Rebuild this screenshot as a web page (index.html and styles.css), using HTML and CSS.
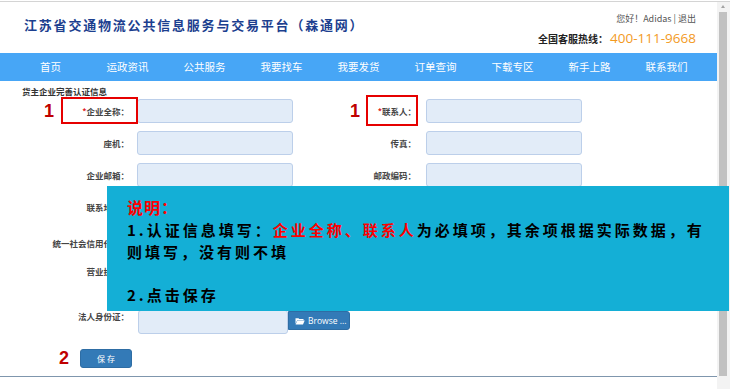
FILE: index.html
```html
<!DOCTYPE html>
<html lang="zh-CN">
<head>
    <meta charset="UTF-8">
    <meta name="viewport" content="width=device-width, initial-scale=1.0">
    <title>货主企业完善认证信息</title>
    <link rel="stylesheet" href="styles.css">
</head>
<body>
    <div class="window">
        <div class="page">
            <!-- Header -->
            <div class="header">
                <div class="logo">江苏省交通物流公共信息服务与交易平台（森通网）</div>
                <div class="user-info">
                    <div class="welcome">您好！Adidas | 退出</div>
                    <div class="hotline"><b>全国客服热线：</b><span class="phone">400-111-9668</span></div>
                </div>
            </div>

            <!-- Main nav -->
            <ul class="nav">
                <li>首页</li>
                <li>运政资讯</li>
                <li>公共服务</li>
                <li>我要找车</li>
                <li>我要发货</li>
                <li>订单查询</li>
                <li>下载专区</li>
                <li>新手上路</li>
                <li>联系我们</li>
            </ul>

            <!-- Form -->
            <div class="content">
                <div class="section-title">货主企业完善认证信息</div>

                <div class="form-row">
                    <span class="mark mark-left">1</span>
                    <span class="hl-box hl-left"></span>
                    <label class="lbl"><em>*</em>企业全称：</label>
                    <input class="field" type="text">
                    <span class="mark mark-right">1</span>
                    <span class="hl-box hl-right"></span>
                    <label class="lbl lbl-r"><em>*</em>联系人：</label>
                    <input class="field" type="text">
                </div>

                <div class="form-row">
                    <label class="lbl">座机：</label>
                    <input class="field" type="text">
                    <label class="lbl lbl-r">传真：</label>
                    <input class="field" type="text">
                </div>

                <div class="form-row">
                    <label class="lbl">企业邮箱：</label>
                    <input class="field" type="text">
                    <label class="lbl lbl-r">邮政编码：</label>
                    <input class="field" type="text">
                </div>

                <div class="form-row row-gap-lg">
                    <label class="lbl">联系地址：</label>
                    <input class="field" type="text">
                </div>

                <div class="form-row row-gap-sm">
                    <label class="lbl">统一社会信用代码：</label>
                    <input class="field" type="text">
                </div>

                <div class="form-row row-gap-xl">
                    <label class="lbl">营业执照：</label>
                    <input class="field" type="text">
                </div>

                <div class="form-row file-row">
                    <label class="lbl">法人身份证：</label>
                    <div class="file-group">
                        <input class="field file-field" type="text">
                        <button class="btn-browse">
                            <svg width="10" height="8" viewBox="0 0 10 8">
                                <path d="M0.5 1.2h3l0.8 0.9h4.2v1.2H2.2L0.5 7z" fill="#fff"/>
                                <path d="M2.4 3.6h7.3L8 7.4H0.6z" fill="#fff"/>
                            </svg>
                            Browse ...
                        </button>
                    </div>
                </div>

                <div class="save-row">
                    <span class="mark mark-save">2</span>
                    <button class="btn-save">保 存</button>
                </div>
            </div>

            <div class="footer-line"></div>
        </div>

        <div class="scrollbar">
            <div class="scroll-arrow"></div>
            <div class="scroll-thumb"></div>
        </div>
    </div>

    <!-- Instruction overlay -->
    <div class="notice">
        <div class="notice-title">说明：</div>
        <p>1.认证信息填写：<span class="req">企业全称、联系人</span>为必填项，其余项根据实际数据，有则填写，没有则不填</p>
        <p class="blank">&nbsp;</p>
        <p>2.点击保存</p>
    </div>
</body>
</html>
```

FILE: styles.css
```css
body {
    margin: 0;
    font-family: "Noto Sans CJK SC", "Liberation Sans", sans-serif;
    color: #333;
    background: #fff;
}

.window {
    display: flex;
    height: 389px;
    border-top: 1px solid #d4d4d4;
    margin-top: 1px;
    box-sizing: border-box;
}

.page {
    width: 717px;
}

/* Header */
.header {
    display: flex;
    justify-content: space-between;
    height: 51px;
    padding: 0 21px 0 24px;
}

.logo {
    padding-top: 14px;
    font-size: 13px;
    line-height: 18px;
    font-weight: bold;
    letter-spacing: 1.8px;
    color: #1c3f8f;
}

.user-info {
    text-align: right;
    padding-top: 11px;
}

.welcome {
    font-size: 9px;
    line-height: 12px;
    color: #555;
}

.hotline {
    margin-top: 2px;
    line-height: 18px;
}

.hotline b {
    font-size: 10px;
    color: #222;
}

.phone {
    font-family: "Open Sans", "Liberation Sans", sans-serif;
    font-size: 13.5px;
    color: #f39a1e;
    margin-left: 2px;
}

/* Nav */
.nav {
    display: flex;
    list-style: none;
    margin: 0;
    padding: 0 0 0 12px;
    height: 28px;
    background-color: #47a6f6;
}

.nav li {
    width: 77px;
    text-align: center;
    line-height: 28px;
    font-size: 10.5px;
    color: #fff;
}

/* Form */
.content {
    padding-top: 4px;
}

.section-title {
    margin-left: 22px;
    font-size: 8.5px;
    line-height: 12px;
    font-weight: bold;
    color: #333;
    margin-bottom: 2px;
}

.form-row {
    position: relative;
    display: grid;
    grid-template-columns: 137px 156px 133px 156px;
    align-items: center;
    height: 24px;
    margin-bottom: 8px;
}

.row-gap-lg {
    margin-bottom: 12px;
}

.row-gap-sm {
    margin-bottom: 4px;
}

.row-gap-xl {
    margin-bottom: 27px;
}

.lbl {
    text-align: right;
    padding-right: 8px;
    font-family: "Noto Sans CJK TC", "Noto Sans CJK SC", sans-serif;
    font-size: 8.5px;
    font-weight: bold;
    color: #444;
    white-space: nowrap;
}

.lbl-r {
    padding-right: 10px;
}

.lbl em {
    font-style: normal;
    color: #e02020;
}

.field {
    box-sizing: border-box;
    width: 156px;
    height: 24px;
    margin: 0;
    background-color: #e2ecf8;
    border: 1px solid #bccfea;
    border-radius: 3px;
}

.file-row {
    align-items: start;
}

.file-group {
    display: flex;
    align-items: flex-start;
    grid-column: 2 / span 2;
    margin-left: 1px;
}

.file-field {
    width: 150px;
}

.btn-browse {
    display: flex;
    align-items: center;
    gap: 3px;
    height: 19px;
    width: 62px;
    margin-top: 1px;
    padding: 0 0 0 6px;
    background-color: #337ab7;
    border: 1px solid #2e6da4;
    border-radius: 0 3px 3px 0;
    color: #fff;
    font-family: "Open Sans", "Liberation Sans", sans-serif;
    font-size: 8.5px;
}

.save-row {
    position: relative;
    padding: 7px 0 0 80px;
    height: 19px;
    margin-bottom: 8px;
}

.btn-save {
    display: block;
    width: 52px;
    height: 19px;
    padding: 0;
    background-color: #337ab7;
    border: 1px solid #2e6da4;
    border-radius: 3px;
    color: #fff;
    font-family: "Noto Sans CJK SC", sans-serif;
    font-size: 8px;
}

/* Red annotation marks */
.mark {
    position: absolute;
    font-family: "Liberation Sans", sans-serif;
    font-weight: bold;
    font-size: 18px;
    line-height: 18px;
    color: #c00000;
}

.mark-left {
    left: 44px;
    top: 3px;
}

.mark-right {
    left: 350px;
    top: 3px;
}

.mark-save {
    left: 59px;
    top: 7px;
}

.hl-box {
    position: absolute;
    border: 2px solid #e60000;
    box-sizing: border-box;
}

.hl-left {
    left: 61px;
    top: -2px;
    width: 77px;
    height: 27px;
}

.hl-right {
    left: 366px;
    top: -4px;
    width: 52px;
    height: 31px;
}

.footer-line {
    border-top: 1px solid #7f96ad;
}

/* Fake scrollbar */
.scrollbar {
    position: relative;
    width: 13px;
    background-color: #f3f3f3;
}

.scroll-arrow {
    position: absolute;
    left: 4px;
    top: 3px;
    border-left: 2.5px solid transparent;
    border-right: 2.5px solid transparent;
    border-bottom: 3px solid #a3a3a3;
}

.scroll-thumb {
    position: absolute;
    left: 2px;
    top: 10px;
    width: 8px;
    height: 364px;
    background-color: #c1c1c1;
}

/* Overlay */
.notice {
    position: absolute;
    left: 107px;
    top: 186px;
    width: 622px;
    height: 125px;
    box-sizing: border-box;
    padding: 9px 18px 0 20px;
    background-color: #14afd6;
    color: #000;
    font-size: 15px;
    font-weight: bold;
    letter-spacing: 3px;
}

.notice-title {
    font-size: 16px;
    line-height: 24px;
    color: #f00;
    letter-spacing: 1px;
}

.notice p {
    margin: 0;
    line-height: 21.5px;
}

.req {
    color: #f00;
}
```
